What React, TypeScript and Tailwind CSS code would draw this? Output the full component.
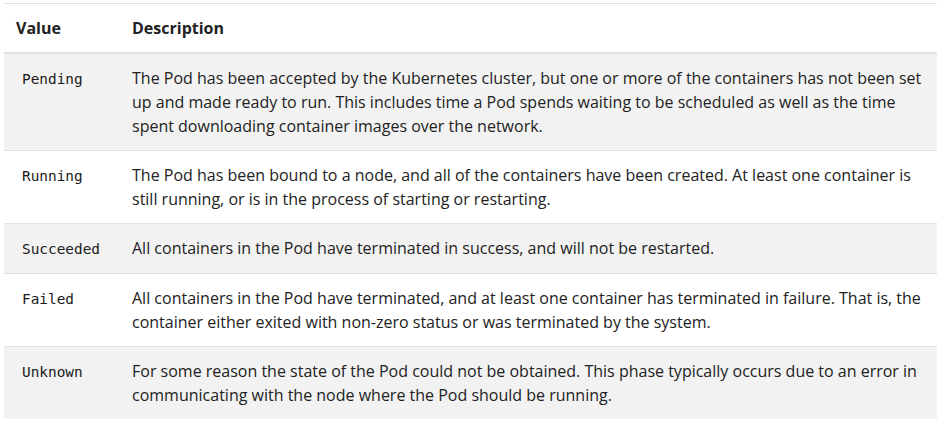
const phases = [
  {
    value: 'Pending',
    description:
      'The Pod has been accepted by the Kubernetes cluster, but one or more of the containers has not been set up and made ready to run. This includes time a Pod spends waiting to be scheduled as well as the time spent downloading container images over the network.',
  },
  {
    value: 'Running',
    description:
      'The Pod has been bound to a node, and all of the containers have been created. At least one container is still running, or is in the process of starting or restarting.',
  },
  {
    value: 'Succeeded',
    description:
      'All containers in the Pod have terminated in success, and will not be restarted.',
  },
  {
    value: 'Failed',
    description:
      'All containers in the Pod have terminated, and at least one container has terminated in failure. That is, the container either exited with non-zero status or was terminated by the system.',
  },
  {
    value: 'Unknown',
    description:
      'For some reason the state of the Pod could not be obtained. This phase typically occurs due to an error in communicating with the node where the Pod should be running.',
  },
];

export default function App() {
  return (
    <div className="w-[950px] h-[425px] bg-white pt-[3px] pl-1 text-[#222] font-['Open_Sans',sans-serif] text-[16px] leading-6">
      <table className="w-[933px] border-collapse">
        <thead>
          <tr>
            <th className="w-[116px] border-t border-b-2 border-[#dee2e6] p-3 text-left font-bold">
              Value
            </th>
            <th className="border-t border-b-2 border-[#dee2e6] p-3 text-left font-bold">
              Description
            </th>
          </tr>
        </thead>
        <tbody>
          {phases.map((phase, i) => (
            <tr key={phase.value} className={i % 2 === 0 ? 'bg-[#f2f2f2]' : 'bg-white'}>
              <td className="border-t border-[#dee2e6] p-3 align-top">
                <code className="px-1.5 font-['DejaVu_Sans_Mono',monospace] text-[14.4px] text-[#1a1a1a]">
                  {phase.value}
                </code>
              </td>
              <td className="border-t border-[#dee2e6] p-3 align-top">{phase.description}</td>
            </tr>
          ))}
        </tbody>
      </table>
    </div>
  );
}
